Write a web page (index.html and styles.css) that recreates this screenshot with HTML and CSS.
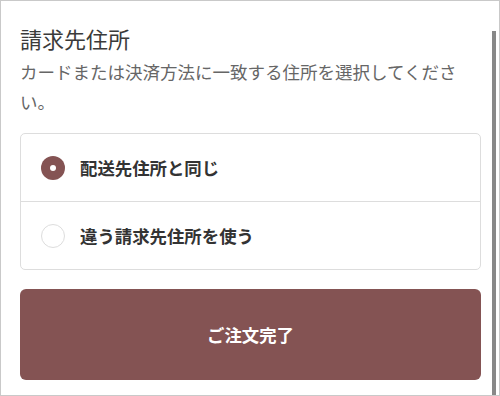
FILE: index.html
```html
<!DOCTYPE html>
<html lang="ja">
<head>
    <meta charset="UTF-8">
    <meta name="viewport" content="width=device-width, initial-scale=1.0">
    <title>請求先住所</title>
    <link rel="stylesheet" href="styles.css">
</head>
<body>
    <div class="frame">
        <h2 class="title">請求先住所</h2>
        <p class="desc">カードまたは決済方法に一致する住所を選択してください。</p>

        <div class="options">
            <label class="option">
                <span class="radio checked"></span>
                <span class="option-label">配送先住所と同じ</span>
            </label>
            <label class="option">
                <span class="radio"></span>
                <span class="option-label">違う請求先住所を使う</span>
            </label>
        </div>

        <button class="submit">ご注文完了</button>

        <div class="scroll-thumb"></div>
    </div>
</body>
</html>
```

FILE: styles.css
```css
body {
    margin: 0;
    font-family: "Noto Sans CJK JP", "Noto Sans", sans-serif;
    background-color: #fff;
}

.frame {
    position: relative;
    width: 500px;
    height: 396px;
    box-sizing: border-box;
    border: 1px solid #c9c9c9;
    padding: 0 18px 0 19px;
    overflow: hidden;
}

.title {
    margin: 22px 0 0;
    font-size: 22px;
    line-height: 30px;
    font-weight: normal;
    color: #3a3a3a;
}

.desc {
    margin: 4px 0 0;
    padding-right: 4px;
    font-size: 17.5px;
    line-height: 30px;
    color: #666;
}

.options {
    margin-top: 16px;
    border: 1px solid #ddd;
    border-radius: 5px;
}

.option {
    display: flex;
    align-items: center;
    height: 67px;
    padding-left: 20px;
    cursor: pointer;
}

.option + .option {
    border-top: 1px solid #ddd;
}

.radio {
    width: 24px;
    height: 24px;
    box-sizing: border-box;
    border: 1px solid #ddd;
    border-radius: 50%;
    margin-right: 15px;
    display: flex;
    align-items: center;
    justify-content: center;
}

.radio.checked {
    border: none;
    background-color: #845353;
}

.radio.checked::after {
    content: "";
    width: 6px;
    height: 6px;
    border-radius: 50%;
    background-color: #fff;
}

.option-label {
    font-size: 17.4px;
    font-weight: bold;
    color: #333;
}

.submit {
    display: block;
    width: 100%;
    height: 91px;
    margin-top: 19px;
    border: none;
    border-radius: 6px;
    background-color: #845353;
    color: #fff;
    font-family: inherit;
    font-size: 17.4px;
    font-weight: bold;
    cursor: pointer;
}

.scroll-thumb {
    position: absolute;
    top: 30px;
    right: 3px;
    bottom: 0;
    width: 4px;
    background-color: #888;
}
```
